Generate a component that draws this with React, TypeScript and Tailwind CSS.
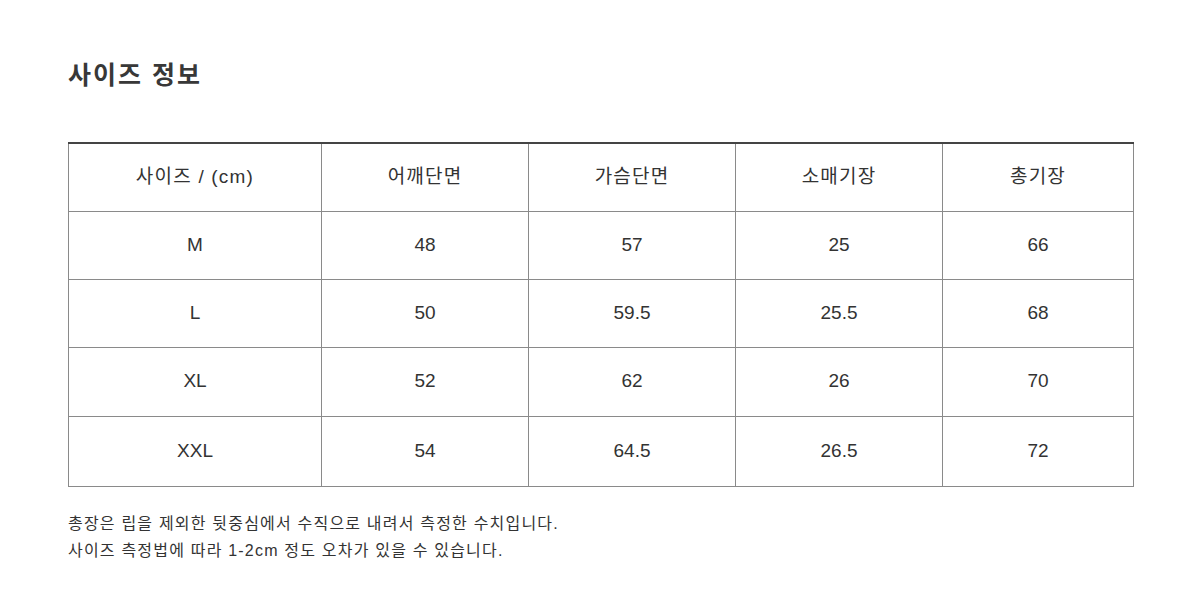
const rows = [
  { h: 'h-[68px]', cells: ['M', '48', '57', '25', '66'] },
  { h: 'h-[68px]', cells: ['L', '50', '59.5', '25.5', '68'] },
  { h: 'h-[69px]', cells: ['XL', '52', '62', '26', '70'] },
  { h: 'h-[70px]', cells: ['XXL', '54', '64.5', '26.5', '72'] },
];

const headers = ['사이즈 / (cm)', '어깨단면', '가슴단면', '소매기장', '총기장'];
const widths = ['w-[253px]', 'w-[207px]', 'w-[207px]', 'w-[207px]', 'w-[191px]'];

export default function App() {
  return (
    <div className="w-[1200px] h-[613px] bg-white text-[#333] font-['Liberation_Sans','Noto_Sans_CJK_KR',sans-serif]">
      <div className="pl-[68px] pt-[58px]">
        <h1 className="text-[25px] font-bold leading-[34px] tracking-[2px] text-[#383838]">사이즈 정보</h1>
        <table className="mt-[50px] w-[1065px] table-fixed border-collapse border-t-2 border-t-[#444]">
          <colgroup>
            {widths.map((w, i) => (
              <col key={i} className={w} />
            ))}
          </colgroup>
          <thead>
            <tr className="h-[68px]">
              {headers.map((h) => (
                <th
                  key={h}
                  className="border border-[#8a8a8a] border-t-0 text-[19px] font-normal tracking-[1.2px] text-center"
                >
                  {h}
                </th>
              ))}
            </tr>
          </thead>
          <tbody>
            {rows.map((r) => (
              <tr key={r.cells[0]} className={r.h}>
                {r.cells.map((c, i) => (
                  <td key={i} className="border border-[#8a8a8a] text-[19px] text-center">
                    {c}
                  </td>
                ))}
              </tr>
            ))}
          </tbody>
        </table>
        <div className="mt-[23px] text-[16px] leading-[27px] tracking-[1.2px] text-[#333]">
          <p>총장은 립을 제외한 뒷중심에서 수직으로 내려서 측정한 수치입니다.</p>
          <p>사이즈 측정법에 따라 1-2cm 정도 오차가 있을 수 있습니다.</p>
        </div>
      </div>
    </div>
  );
}
